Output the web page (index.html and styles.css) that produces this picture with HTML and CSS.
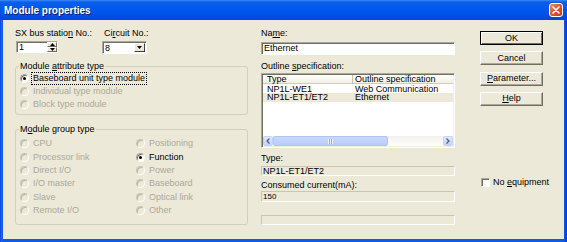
FILE: index.html
```html
<!DOCTYPE html>
<html>
<head>
  <title>Module properties</title>
  <link rel="stylesheet" href="styles.css">
</head>
<body>
  <div class="window">
    <div class="titlebar">
      <span class="title">Module properties</span>
      <span class="close">
        <svg width="12" height="12" viewBox="0 0 12 12"><path d="M3 3 L9 9 M9 3 L3 9" stroke="#fff" stroke-width="1.6" stroke-linecap="round"/></svg>
      </span>
    </div>

    <div class="client">
      <!-- left: station, circuit and the two option groups -->
      <div class="col-left">
        <div class="top-row">
          <div class="field station">
            <div class="label">SX bus statio<u>n</u> No.:</div>
            <div class="spin">
              <span class="spin-value">1</span>
              <span class="spin-btns">
                <span class="spin-btn"><svg width="5" height="3" viewBox="0 0 5 3"><path d="M0 3 L2.5 0 L5 3 Z" fill="#000"/></svg></span>
                <span class="spin-btn"><svg width="5" height="3" viewBox="0 0 5 3"><path d="M0 0 L2.5 3 L5 0 Z" fill="#000"/></svg></span>
              </span>
            </div>
          </div>
          <div class="field circuit">
            <div class="label">Ci<u>r</u>cuit No.:</div>
            <div class="combo">
              <span class="combo-value">8</span>
              <span class="combo-btn"><svg width="5" height="3" viewBox="0 0 5 3"><path d="M0 0 L2.5 3 L5 0 Z" fill="#000"/></svg></span>
            </div>
          </div>
        </div>

        <fieldset class="group attr">
          <legend>Module <u>a</u>ttribute type</legend>
          <div class="radio checked"><span class="dot"></span><span class="focus">Baseboard unit type module</span></div>
          <div class="radio disabled"><span class="dot"></span>Individual type module</div>
          <div class="radio disabled"><span class="dot"></span>Block type module</div>
        </fieldset>

        <fieldset class="group grouptype">
          <legend>M<u>o</u>dule group type</legend>
          <div class="radio-grid">
            <div class="radio disabled"><span class="dot"></span>CPU</div>
            <div class="radio disabled"><span class="dot"></span>Positioning</div>
            <div class="radio disabled"><span class="dot"></span>Processor link</div>
            <div class="radio checked"><span class="dot"></span>Function</div>
            <div class="radio disabled"><span class="dot"></span>Direct I/O</div>
            <div class="radio disabled"><span class="dot"></span>Power</div>
            <div class="radio disabled"><span class="dot"></span>I/O master</div>
            <div class="radio disabled"><span class="dot"></span>Baseboard</div>
            <div class="radio disabled"><span class="dot"></span>Slave</div>
            <div class="radio disabled"><span class="dot"></span>Optical link</div>
            <div class="radio disabled"><span class="dot"></span>Remote I/O</div>
            <div class="radio disabled"><span class="dot"></span>Other</div>
          </div>
        </fieldset>
      </div>

      <!-- middle: name, outline list and read-only info -->
      <div class="col-mid">
        <div class="label">Na<u>m</u>e:</div>
        <div class="edit name-edit">Ethernet</div>

        <div class="label spec-label">Outline <u>s</u>pecification:</div>
        <div class="listview">
          <div class="lv-header">
            <span class="lv-col c1">Type</span>
            <span class="lv-col c2">Outline specification</span>
          </div>
          <div class="lv-body">
            <div class="lv-row"><span class="c1">NP1L-WE1</span><span class="c2">Web Communication</span></div>
            <div class="lv-row selected"><span class="c1">NP1L-ET1/ET2</span><span class="c2">Ethernet</span></div>
          </div>
          <div class="hscroll">
            <span class="sb-arrow"><svg width="4" height="6" viewBox="0 0 4 6"><path d="M3.5 0.5 L1 3 L3.5 5.5" stroke="#4d6185" stroke-width="1.3" fill="none"/></svg></span>
            <span class="sb-thumb"><span class="grip"></span></span>
            <span class="sb-track"></span>
            <span class="sb-arrow"><svg width="4" height="6" viewBox="0 0 4 6"><path d="M0.5 0.5 L3 3 L0.5 5.5" stroke="#4d6185" stroke-width="1.3" fill="none"/></svg></span>
          </div>
        </div>

        <div class="label type-label">Type:</div>
        <div class="static type-value">NP1L-ET1/ET2</div>

        <div class="label current-label">Consumed current(mA):</div>
        <div class="static current-value">150</div>

        <div class="static empty-value"></div>
      </div>

      <!-- right: dialog buttons -->
      <div class="col-right">
        <button class="btn default">OK</button>
        <button class="btn">Cancel</button>
        <button class="btn"><u>P</u>arameter...</button>
        <button class="btn"><u>H</u>elp</button>
        <label class="check"><span class="box"></span><span>No <u>e</u>quipment</span></label>
      </div>
    </div>
  </div>
</body>
</html>
```

FILE: styles.css
```css
* {
  box-sizing: border-box;
}
body {
  margin: 0;
  background: #0831d9;
  font-family: "Liberation Sans", Arial, sans-serif;
  font-size: 9px;
  line-height: 11px;
  color: #000;
}
u {
  text-underline-offset: 1px;
}

.window {
  width: 567px;
  height: 242px;
  display: flex;
  flex-direction: column;
  background: linear-gradient(90deg, #0831d9 0, #166aee 1px, #0d5be6 3px, #0d5be6 564px, #0a44d8 566px, #0831d9 567px);
}
.titlebar {
  height: 20px;
  display: flex;
  align-items: center;
  justify-content: space-between;
  padding: 0 4px 0 4px;
  background: linear-gradient(#3d8bf8 0, #0a5fea 2px, #0058ee 9px, #0050e6 15px, #0046d8 20px);
  color: #fff;
}
.title {
  font-weight: bold;
  font-size: 10px;
  text-shadow: 1px 1px #0a246a;
}
.close {
  width: 14px;
  height: 14px;
  display: flex;
  align-items: center;
  justify-content: center;
  border: 1px solid #fff;
  border-radius: 3px;
  background: linear-gradient(135deg, #f08a65 0, #de5a32 45%, #c23c15 100%);
}

.client {
  flex: 1;
  margin: 0 3px 3px;
  background: #ece9d8;
  display: flex;
  padding: 8px 0 0 12px;
}

/* left column */
.col-left {
  width: 233px;
  flex: none;
}
.top-row {
  display: flex;
}
.station {
  width: 87px;
}
.circuit .label {
  padding-left: 2px;
}
.spin {
  margin: 2px 0 0 1px;
  width: 42px;
  height: 12px;
  display: flex;
  background: #fff;
  border: 1px solid;
  border-color: #aca899 #fff #fff #aca899;
  box-shadow: inset 1px 1px #716f64;
}
.spin-value {
  flex: 1;
  padding: 0 0 0 2px;
  line-height: 10px;
}
.spin-btns {
  width: 10px;
  display: flex;
  flex-direction: column;
}
.spin-btn {
  flex: 1;
  display: flex;
  align-items: center;
  justify-content: center;
  background: #ece9d8;
  border: 1px solid;
  border-color: #fff #716f64 #716f64 #fff;
}
.combo {
  margin-top: 2px;
  width: 45px;
  height: 13px;
  display: flex;
  background: #fff;
  border: 1px solid;
  border-color: #aca899 #fff #fff #aca899;
  box-shadow: inset 1px 1px #716f64;
  padding: 1px;
}
.combo-value {
  flex: 1;
  padding-left: 1px;
  line-height: 10px;
}
.combo-btn {
  width: 11px;
  display: flex;
  align-items: center;
  justify-content: center;
  background: #ece9d8;
  border: 1px solid;
  border-color: #fff #404040 #404040 #fff;
}

.group {
  margin: 7px 0 0;
  padding: 0 4px 3px;
  border: 1px solid #d0d0bf;
  border-radius: 3px;
  min-width: 0;
  width: 233px;
}
.group legend {
  padding: 0 1px;
  margin-left: -1px;
  line-height: 11px;
}
.grouptype {
  margin-top: 9px;
  padding: 2px 4px 7px;
}
.radio-grid {
  display: grid;
  grid-template-columns: 116px 1fr;
  grid-auto-rows: 13.4px;
}
.radio {
  display: flex;
  align-items: center;
  height: 13px;
  white-space: nowrap;
}
.radio-grid .radio {
  height: auto;
}
.radio .dot {
  position: relative;
  flex: none;
  width: 9px;
  height: 9px;
  margin-right: 4px;
  border-radius: 50%;
  border: 1px solid;
  border-color: #aca899 #fff #fff #aca899;
  background: #fff;
  box-shadow: inset 1px 1px #716f64;
}
.radio.checked .dot::after {
  content: "";
  position: absolute;
  left: 2px;
  top: 2px;
  width: 3px;
  height: 3px;
  border-radius: 50%;
  background: #000;
}
.radio.disabled {
  color: #aca899;
}
.radio.disabled .dot {
  background: #ece9d8;
  border-color: #c9c5b5 #fff #fff #c9c5b5;
  box-shadow: inset 1px 1px #b9b5a5;
}
.focus {
  outline: 1px dotted #000;
  padding: 0 1px;
  margin-left: -1px;
}

/* middle column */
.col-mid {
  width: 194px;
  flex: none;
  margin-left: 13px;
}
.edit {
  margin-top: 3px;
  height: 13px;
  background: #fff;
  border: 1px solid;
  border-color: #aca899 #fff #fff #aca899;
  box-shadow: inset 1px 1px #716f64;
  padding: 0 0 0 2px;
  line-height: 11px;
}
.spec-label {
  margin-top: 6px;
}
.listview {
  margin-top: 1px;
  height: 75px;
  display: flex;
  flex-direction: column;
  background: #fff;
  border: 1px solid;
  border-color: #aca899 #fff #fff #aca899;
  box-shadow: inset 1px 1px #716f64, inset -1px -1px #f1efe2;
  padding: 1px;
}
.lv-header {
  height: 9px;
  display: flex;
  background: linear-gradient(#fff, #f1efe2);
  border-bottom: 1px solid #d0cdbf;
  line-height: 8px;
}
.lv-col {
  padding-left: 4px;
}
.lv-header .c1 {
  width: 90px;
  border-right: 1px solid #c7c5b2;
}
.lv-header .c2 {
  padding-left: 2px;
}
.lv-body {
  flex: 1;
  padding-top: 0.5px;
}
.lv-row {
  height: 8.5px;
  display: flex;
  line-height: 8.5px;
}
.lv-row .c1 {
  width: 90px;
  padding-left: 4px;
}
.lv-row .c2 {
  padding-left: 2px;
}
.lv-row.selected {
  background: #ece9d8;
}
.hscroll {
  height: 10px;
  display: flex;
  background: linear-gradient(#f3f1ec, #fefefe);
}
.sb-arrow {
  width: 10px;
  display: flex;
  align-items: center;
  justify-content: center;
  background: linear-gradient(#e1eafe, #c1d3fb);
  border: 1px solid #c3d3fd;
  border-radius: 2px;
}
.sb-thumb {
  width: 115px;
  display: flex;
  align-items: center;
  justify-content: center;
  background: linear-gradient(#cad8fd, #b8cbf9);
  border: 1px solid #b0c4f6;
  border-radius: 2px;
}
.grip {
  width: 5px;
  height: 5px;
  background: repeating-linear-gradient(90deg, #eef3ff 0 1px, #8ca7e8 1px 2px);
}
.sb-track {
  flex: 1;
}
.type-label {
  margin-top: 5px;
}
.static {
  border: 1px solid;
  border-color: #c9c5b5 #fff #fff #c9c5b5;
  padding-left: 1px;
}
.type-value {
  margin-top: 2px;
  height: 10px;
  line-height: 9px;
}
.current-label {
  margin-top: 4px;
}
.current-value {
  height: 11px;
  line-height: 10px;
  font-size: 8px;
}
.empty-value {
  margin-top: 13px;
  height: 10px;
}

/* right column */
.col-right {
  margin-left: 25px;
  padding-top: 3px;
  display: flex;
  flex-direction: column;
  align-items: flex-start;
}
.btn {
  width: 63px;
  height: 14px;
  margin: 0 0 6.3px;
  padding: 0;
  font: inherit;
  line-height: 11px;
  color: #000;
  background: #ece9d8;
  border: 1px solid;
  border-color: #fff #716f64 #716f64 #fff;
  box-shadow: inset -1px -1px #aca899;
}
.btn.default {
  border-color: #000;
  box-shadow: inset 1px 1px #fff, inset -1px -1px #716f64;
}
.check {
  margin: 65px 0 0 1px;
  display: flex;
  align-items: center;
}
.box {
  width: 9px;
  height: 9px;
  margin-right: 3px;
  background: #fff;
  border: 1px solid;
  border-color: #aca899 #fff #fff #aca899;
  box-shadow: inset 1px 1px #716f64;
}
```
